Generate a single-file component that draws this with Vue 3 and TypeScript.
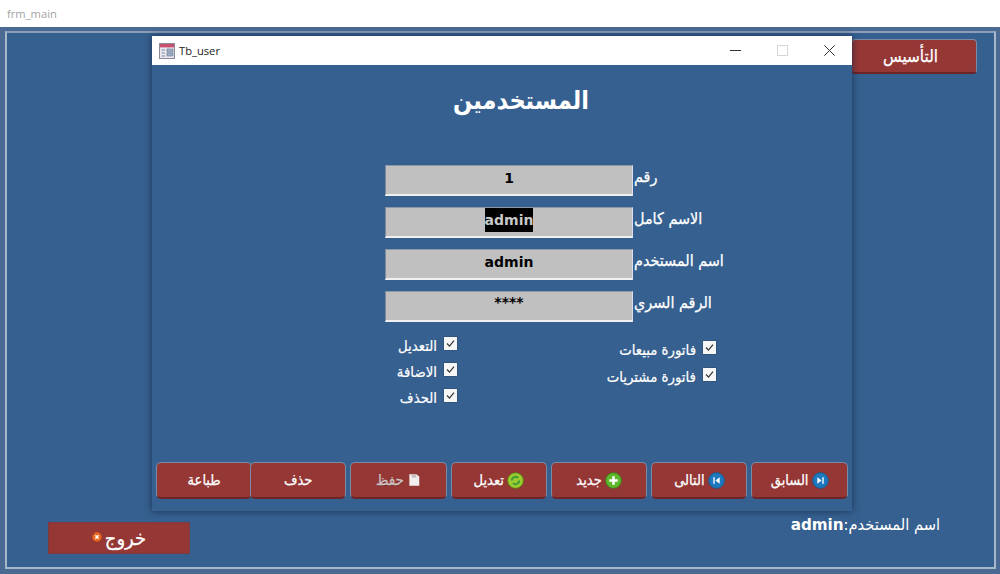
<script setup lang="ts">
interface Field { label: string; value: string; selected?: boolean; stars?: boolean }
const fields: Field[] = [
  { label: 'رقم', value: '1' },
  { label: 'الاسم كامل', value: 'admin', selected: true },
  { label: 'اسم المستخدم', value: 'admin' },
  { label: 'الرقم السري', value: '****', stars: true },
]
const leftPerms = ['التعديل', 'الاضافة', 'الحذف']
const rightPerms = ['فاتورة مبيعات', 'فاتورة مشتريات']
</script>

<template>
  <div class="screen">
    <header class="app-title">frm_main</header>
    <main class="desk">
      <div class="frame">
        <div class="frame-top">
          <button class="red-btn setup">التأسيس</button>
        </div>
        <div class="frame-bottom">
          <button class="red-btn exit">
            <svg class="ico-exit" viewBox="0 0 12 12" width="10" height="10">
              <circle cx="6" cy="6" r="5.6" fill="#e8651c" />
              <path d="M4 4l4 4M8 4l-4 4" stroke="#fff" stroke-width="1.8" />
            </svg>
            <span>خروج</span>
          </button>
          <div class="user-label">اسم المستخدم:<b>admin</b></div>
        </div>
      </div>

      <section class="window">
        <div class="win-bar">
          <svg class="win-icon" viewBox="0 0 16 16" width="16" height="16">
            <rect x="0.5" y="0.5" width="15" height="15" fill="#e9e9ef" stroke="#8a8a98" />
            <rect x="1" y="1" width="14" height="3.4" fill="#c8506e" />
            <path d="M2.5 7h3.5M2.5 10h3.5M2.5 13h3.5" stroke="#7d8ba0" />
            <rect x="8" y="6" width="6" height="3" fill="#9eb0c8" stroke="#66758c" stroke-width=".6" />
            <rect x="8" y="10" width="6" height="3" fill="#9eb0c8" stroke="#66758c" stroke-width=".6" />
          </svg>
          <span class="win-name">Tb_user</span>
          <div class="win-controls">
            <svg viewBox="0 0 11 11" width="11" height="11"><path d="M0 5.5h11" stroke="#333" /></svg>
            <svg viewBox="0 0 11 11" width="11" height="11"><rect x=".5" y=".5" width="10" height="10" fill="none" stroke="#d6d6d6" /></svg>
            <svg viewBox="0 0 11 11" width="11" height="11"><path d="M.3.3l10.4 10.4M10.7.3L.3 10.7" stroke="#333" /></svg>
          </div>
        </div>
        <div class="win-body">
          <h1 class="heading">المستخدمين</h1>
          <div class="form">
            <div v-for="f in fields" :key="f.label" class="row">
              <div class="input" :class="{ stars: f.stars }">
                <span :class="{ sel: f.selected }">{{ f.value }}</span>
              </div>
              <label class="row-label">{{ f.label }}</label>
            </div>
          </div>
          <div class="perms">
            <div class="perm-col col-a">
              <div v-for="p in leftPerms" :key="p" class="perm">
                <span class="perm-text">{{ p }}</span>
                <span class="check"><svg viewBox="0 0 13 13" width="13" height="13"><path d="M3 6.5l2.5 2.7L10 3.6" fill="none" stroke="#333" stroke-width="1.2" /></svg></span>
              </div>
            </div>
            <div class="perm-col col-b">
              <div v-for="p in rightPerms" :key="p" class="perm">
                <span class="perm-text">{{ p }}</span>
                <span class="check"><svg viewBox="0 0 13 13" width="13" height="13"><path d="M3 6.5l2.5 2.7L10 3.6" fill="none" stroke="#333" stroke-width="1.2" /></svg></span>
              </div>
            </div>
          </div>
          <div class="actions">
            <button class="red-btn act">طباعة</button>
            <button class="red-btn act overlap">حذف</button>
            <button class="red-btn act muted">
              <span>حفظ</span>
              <svg viewBox="0 0 12 12" width="14" height="14">
                <path d="M2 1h6l2.5 2v8H2z" fill="#f2eeee" />
                <path d="M4 1v3h4V1" fill="#c9bcbc" />
              </svg>
            </button>
            <button class="red-btn act">
              <span>تعديل</span>
              <svg viewBox="0 0 16 16" width="17" height="17">
                <circle cx="8" cy="8" r="7.4" fill="#9ccb2e" stroke="#4f7d12" stroke-width=".8" />
                <path d="M4.5 8a3.5 3.5 0 0 1 6-2.4M11.5 8a3.5 3.5 0 0 1-6 2.4" fill="none" stroke="#3f9a3a" stroke-width="1.8" />
              </svg>
            </button>
            <button class="red-btn act">
              <span>جديد</span>
              <svg viewBox="0 0 16 16" width="17" height="17">
                <circle cx="8" cy="8" r="7.4" fill="#5cb82a" stroke="#3a7d16" stroke-width=".8" />
                <path d="M8 4v8M4 8h8" stroke="#fff" stroke-width="2.4" />
              </svg>
            </button>
            <button class="red-btn act">
              <span>التالى</span>
              <svg viewBox="0 0 16 16" width="17" height="17">
                <circle cx="8" cy="8" r="7.4" fill="#1d78bd" stroke="#135a92" stroke-width=".8" />
                <path d="M5 5v6h1.3V5zM11 5L7 8l4 3z" fill="#fff" />
              </svg>
            </button>
            <button class="red-btn act">
              <span>السابق</span>
              <svg viewBox="0 0 16 16" width="17" height="17">
                <circle cx="8" cy="8" r="7.4" fill="#1d78bd" stroke="#135a92" stroke-width=".8" />
                <path d="M11 5v6H9.7V5zM5 5l4 3-4 3z" fill="#fff" />
              </svg>
            </button>
          </div>
        </div>
      </section>
    </main>
  </div>
</template>

<style scoped>
.screen {
  width: 1000px;
  height: 574px;
  display: flex;
  flex-direction: column;
  overflow: hidden;
  font-family: "DejaVu Sans", sans-serif;
  background: #fff;
}
.app-title {
  height: 27px;
  flex: none;
  padding-left: 7px;
  font: 11.2px/27px "Open Sans", sans-serif;
  color: #a3a3a3;
}
.desk {
  flex: 1;
  position: relative;
  background: #4a6a94;
  padding: 4px 4px 5px 5px;
  display: flex;
}
.frame {
  flex: 1;
  border: 2px solid #a8b8cb;
  border-top-color: #8d9fb8;
  background: #36608f;
  display: flex;
  flex-direction: column;
  justify-content: space-between;
  padding: 6px 17px 13px 41px;
}
.frame-top {
  display: flex;
  justify-content: flex-end;
}
.frame-bottom {
  display: flex;
  justify-content: space-between;
  align-items: flex-start;
}
.red-btn {
  display: flex;
  align-items: center;
  justify-content: center;
  gap: 3px;
  padding: 0;
  background: #953735;
  color: #fff;
  border: 1px solid #7a8ba6;
  border-bottom: 2px solid #6b2527;
  border-radius: 4px;
  font-family: "DejaVu Sans Condensed", "DejaVu Sans", sans-serif;
  -webkit-text-stroke: 0.25px currentColor;
}
.setup {
  width: 126px;
  height: 35px;
  padding-right: 7px;
  font-size: 17px;
}
.exit {
  width: 142px;
  height: 32px;
  border-radius: 0;
  border: 1px solid #7a3a42;
  font-size: 20px;
}
.ico-exit {
  margin-top: -3px;
}
.user-label {
  direction: rtl;
  width: 150px;
  margin-right: 37px;
  margin-top: -7px;
  color: #fff;
  font-family: "DejaVu Sans Condensed", "DejaVu Sans", sans-serif;
  font-size: 16.3px;
  white-space: nowrap;
}
.user-label b {
  font-family: "DejaVu Sans", sans-serif;
  font-size: 15.2px;
  font-weight: 700;
}
.window {
  position: absolute;
  left: 152px;
  top: 9px;
  width: 700px;
  height: 475px;
  display: flex;
  flex-direction: column;
  background: #36608f;
  box-shadow: 0 0 7px rgba(18, 36, 66, 0.8);
}
.win-bar {
  height: 29px;
  flex: none;
  background: #fff;
  display: flex;
  align-items: center;
  padding-left: 7px;
}
.win-name {
  margin-left: 4px;
  font: 11.2px "Open Sans", sans-serif;
  color: #222;
}
.win-controls {
  margin-left: auto;
  display: flex;
  gap: 36px;
  padding-right: 17px;
}
.win-body {
  flex: 1;
  display: flex;
  flex-direction: column;
  min-height: 0;
}
.heading {
  margin: 16px 0 0;
  padding-left: 38px;
  height: 84px;
  text-align: center;
  color: #fff;
  font-family: "DejaVu Sans Condensed", "DejaVu Sans", sans-serif;
  font-size: 25px;
  line-height: 40px;
  font-weight: 700;
}
.form {
  display: flex;
  flex-direction: column;
  gap: 11px;
  padding-left: 233px;
}
.row {
  display: flex;
  height: 31px;
}
.input {
  width: 248px;
  box-sizing: border-box;
  background: #c0c0c0;
  border: 1px solid #8c98a5;
  border-left-color: #7f8b99;
  border-bottom: 2px solid #f0f0f0;
  border-right-color: #dde;
  text-align: center;
  font-size: 14px;
  font-weight: 700;
  line-height: 25px;
  color: #000;
}
.stars {
  line-height: 20px;
}
.sel {
  display: inline-block;
  background: #000;
  color: #c8c8c8;
  line-height: 24px;
}
.row-label {
  padding-left: 1px;
  direction: rtl;
  color: #fff;
  font-family: "DejaVu Sans Condensed", "DejaVu Sans", sans-serif;
  -webkit-text-stroke: 0.25px #fff;
  font-size: 16px;
  line-height: 23px;
  white-space: nowrap;
}
.perms {
  display: grid;
  grid-template-columns: 305px 259px;
  margin-top: 15px;
}
.perm-col {
  display: flex;
  flex-direction: column;
  align-items: flex-end;
}
.col-a {
  gap: 13px;
}
.col-b {
  padding-top: 4px;
  gap: 14px;
}
.perm {
  height: 13px;
  display: flex;
  align-items: center;
  gap: 7px;
}
.perm-text {
  direction: rtl;
  color: #fff;
  font-family: "DejaVu Sans Condensed", "DejaVu Sans", sans-serif;
  -webkit-text-stroke: 0.2px #fff;
  font-size: 14.8px;
  white-space: nowrap;
  margin-top: 3px;
}
.check {
  width: 13px;
  height: 13px;
  background: #f6f6f6;
  display: block;
  box-shadow: 0 0 1px #223;
}
.check svg {
  display: block;
}
.actions {
  margin-top: auto;
  display: flex;
  gap: 4px;
  padding: 0 4px 12px;
}
.act {
  width: 96.3px;
  height: 37px;
  font-size: 14.5px;
  border-radius: 5px;
}
.overlap {
  margin-left: -6.3px;
}
.muted {
  color: #d2c4c4;
  text-shadow: 0 1px 0 #6f2a2a;
  font-size: 15px;
}
</style>
